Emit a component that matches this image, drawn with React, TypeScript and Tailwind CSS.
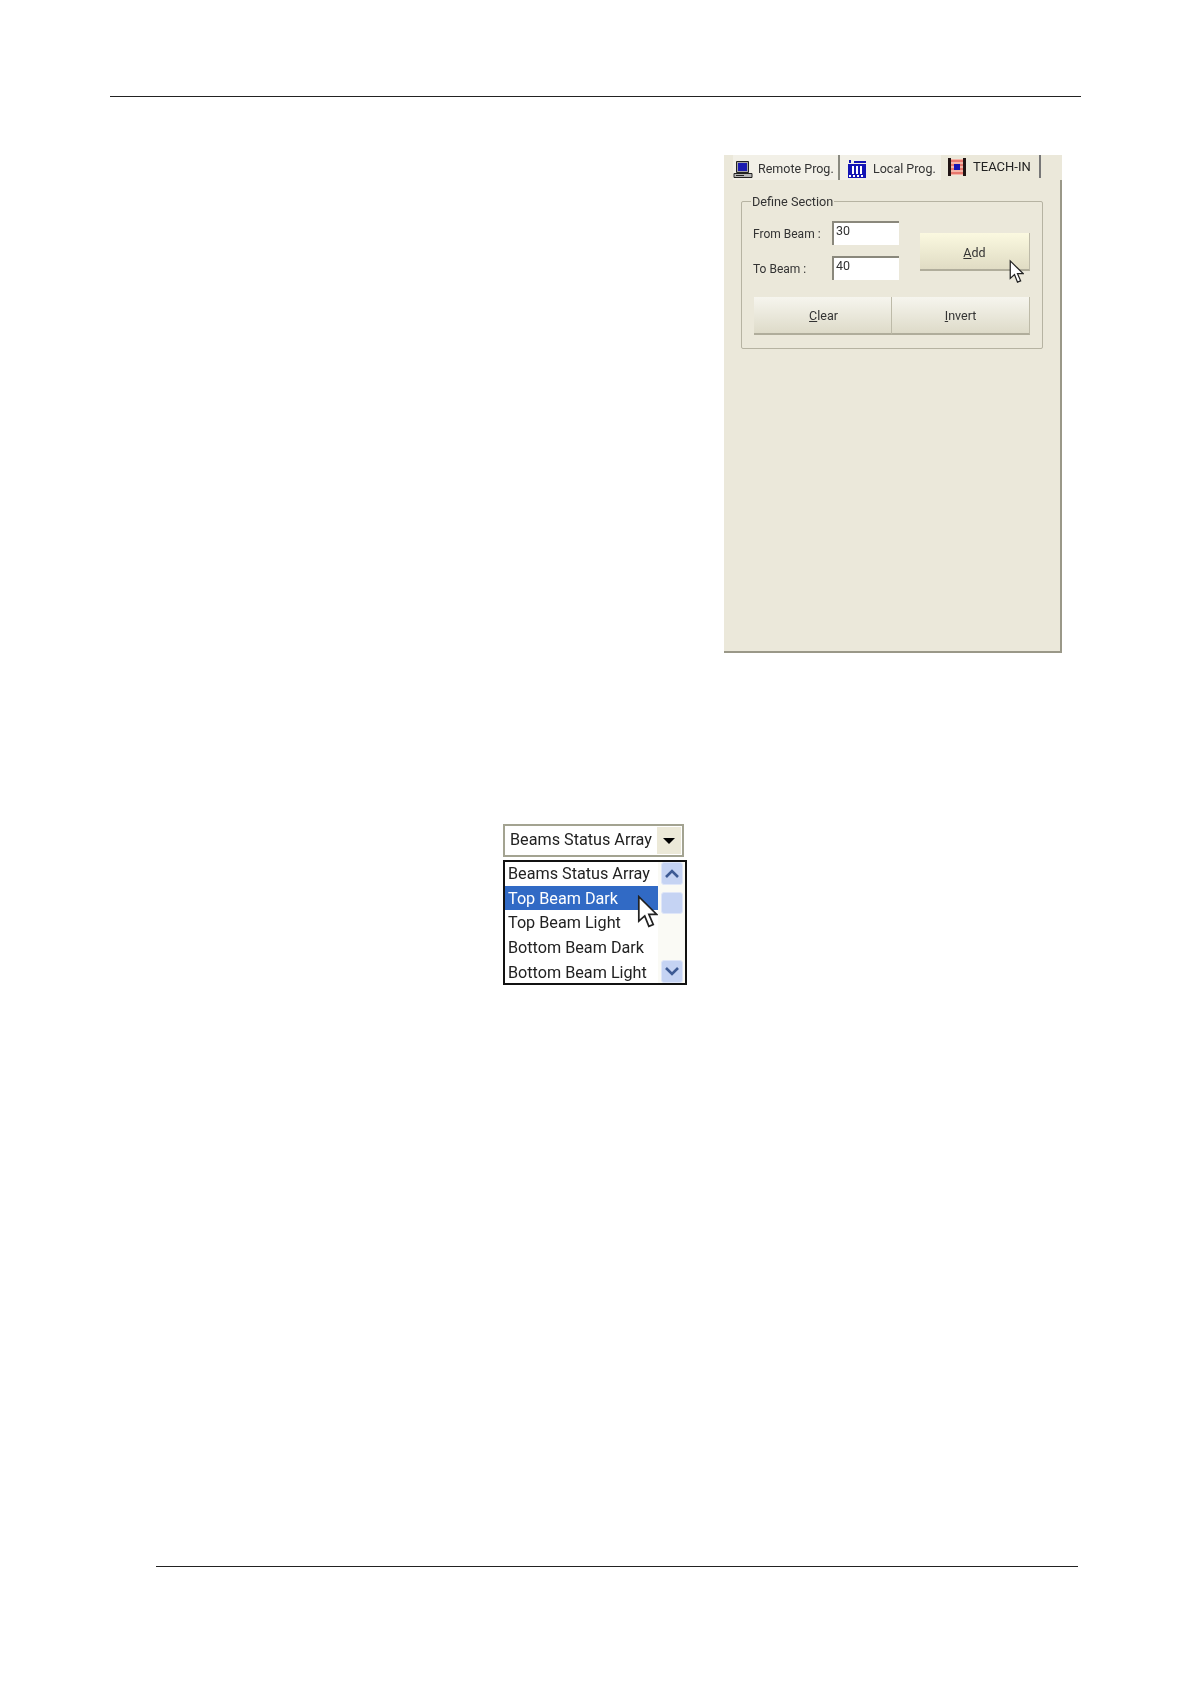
const Remote = () => (
  <svg width="20" height="18" viewBox="0 0 20 18" className="shrink-0">
    <path d="M3.500 .5h12v11h-12z" fill="#a4a4a4" stroke="#222" />
    <path d="M5 2h9v8H5z" fill="#1a1ab0" />
    <path d="M1 12.500h18v4H1z" fill="#b4b4b4" stroke="#222" />
    <path d="M3 14.500h8" stroke="#222" />
  </svg>
);
const Local = () => (
  <svg width="18" height="18" viewBox="0 0 18 18" className="shrink-0">
    <path d="M0 4h18v14H0z" fill="#1414b4" />
    <path d="M1 0h2v3H1zM6 1h12v2H6z" fill="#1414b4" />
    <path d="M4 6h2v8H4zM8 6h2v8H8zM12 6h2v8h-2z" fill="#fff" />
    <path d="M1 15h2v2H1zM5 15h2v2H5zM9 15h2v2H9zM13 15h2v2h-2z" fill="#fff" />
  </svg>
);
const Teach = () => (
  <svg width="18" height="18" viewBox="0 0 18 18" className="shrink-0">
    <path d="M0 1h18v16H0z" fill="#f5b5a8" />
    <path d="M0 3h18M0 7h18M0 11h18M0 15h18" stroke="#d83a34" />
    <path d="M0 0h3v18H0zM15 0h3v18h-3z" fill="#201414" />
    <path d="M6 6h6v6H6z" fill="#1414b4" />
  </svg>
);
const Cursor = ({ w, h }: { w: number; h: number }) => (
  <svg width={w} height={h} viewBox="0 0 12 19" className="absolute">
    <path d="M1 1v14l3.400-3 2.400 6 2.500-1-2.500-5.800h4.500z" fill="#fff" stroke="#222" strokeWidth="1" />
  </svg>
);
const btn = "flex items-center justify-center bg-gradient-to-b from-[#f6f5ee] to-[#dedbc9] border-b-2 border-r border-b-[#b0ad9b] border-r-[#bdbaa8] text-[12.5px] text-[#333] whitespace-nowrap pt-[3px]";
const Chev = ({ up }: { up: boolean }) => (
  <div className="w-[22px] h-[23px] bg-[#c5d3f3] border border-[#dfe6f8] rounded-[3px] flex items-center justify-center">
    <svg width="16" height="11" viewBox="0 0 16 11">
      <path d={up ? "M2 9l6-6 6 6" : "M2 2l6 6 6-6"} fill="none" stroke="#3d5a94" strokeWidth="2.600" />
    </svg>
  </div>
);
const row = "pl-[3px] h-[24.700px] leading-[26.500px]";
export default function App() {
  return (
    <div className="w-[1191px] h-[1684px] bg-white overflow-hidden flex flex-col" style={{ fontFamily: 'Roboto, "Liberation Sans", sans-serif' }}>
      <div className="ml-[110px] mt-[96px] w-[971px] h-px bg-[#222]" />
      <div className="ml-[724px] mt-[58px] w-[338px] h-[498px] flex flex-col blur-[0.4px]">
        <div className="h-[25px] flex bg-[#ebe8da] text-[12.5px] text-[#333] pl-[9px] whitespace-nowrap">
          <div className="flex items-center gap-[5px] w-[107px] bg-[#f2f0e7] border-r-2 border-[#8a8a80] h-[25px] pt-[4px]">
            <Remote /><span>Remote Prog.</span>
          </div>
          <div className="flex items-center gap-[7px] pl-[8px] w-[101px] bg-[#f2f0e7] h-[25px] pt-[3px]">
            <Local /><span>Local Prog.</span>
          </div>
          <div className="flex items-center gap-[7px] pl-[7px] h-[23px] w-[100px] border-r-2 border-[#777] text-[#222] text-[13px]">
            <Teach /><span>TEACH-IN</span>
          </div>
        </div>
        <div className="flex-1 bg-[#ebe8da] border-r-2 border-b-2 border-[#9a9888] pl-[17px] pt-[21px]">
          <div className="relative w-[302px] h-[148px] border border-[#b6b3a2] rounded-[2px] pt-[19px] pl-[12px]">
            <span className="absolute left-[9px] top-[-10px] px-px bg-[#ebe8da] text-[12.700px] text-[#333] whitespace-nowrap">Define Section</span>
            <div className="flex">
              <div className="flex flex-col gap-[11px] w-[79px] text-[12px] text-[#333] whitespace-nowrap pt-px -ml-px">
                <div className="h-[24px] flex items-center">From Beam :</div>
                <div className="h-[24px] flex items-center">To Beam :</div>
              </div>
              <div className="flex flex-col gap-[11px]">
                <div className="w-[67px] h-[24px] bg-white border-l-2 border-t-2 border-[#8a887c] text-[12.500px] text-[#333] pl-[2px] leading-[15px]">30</div>
                <div className="w-[67px] h-[24px] bg-white border-l-2 border-t-2 border-[#8a887c] text-[12.500px] text-[#333] pl-[2px] leading-[15px]">40</div>
              </div>
              <div className={`${btn} ml-[21px] mt-[12px] w-[110px] h-[38px] from-[#fbf9e0] to-[#e0dcc4] pt-[5px]`}>
                <span><u>A</u>dd</span>
              </div>
            </div>
            <div className="flex mt-[16px]">
              <div className={`${btn} w-[138px] h-[38px]`}><span className="pl-[2px]"><u>C</u>lear</span></div>
              <div className={`${btn} w-[138px] h-[38px]`}><span><u>I</u>nvert</span></div>
            </div>
            <div className="absolute left-[267px] top-[57px]"><Cursor w={15} h={25} /></div>
          </div>
        </div>
      </div>
      <div className="ml-[503px] mt-[171px] w-[184px] blur-[0.4px]">
        <div className="w-[181px] h-[33px] border-2 border-[#a3a391] flex items-center bg-white pl-[5px] text-[16.200px] text-[#222] whitespace-nowrap">
          <span className="flex-1">Beams Status Array</span>
          <div className="w-[24px] h-[27px] mr-px bg-[#ece9d8] flex items-center justify-center">
            <svg width="12" height="8" viewBox="0 0 12 8"><path d="M0 1h12L6 7z" fill="#000" /></svg>
          </div>
        </div>
        <div className="relative mt-[3px] w-[184px] h-[125px] border-2 border-[#111] bg-white flex text-[16.200px] text-[#222] whitespace-nowrap">
          <div className="w-[153px] overflow-hidden -mt-px">
            <div className={row}>Beams Status Array</div>
            <div className={`${row} bg-[#316ac5] text-white`}>Top Beam Dark</div>
            <div className={row}>Top Beam Light</div>
            <div className={row}>Bottom Beam Dark</div>
            <div className={row}>Bottom Beam Light</div>
          </div>
          <div className="flex-1 flex flex-col bg-[#fafaf5] pl-[3px] pr-[2px]">
            <Chev up />
            <div className="mt-[7px] w-[22px] h-[22px] bg-[#c5d3f3] border border-[#dfe6f8] rounded-[3px]" />
            <div className="flex-1" />
            <Chev up={false} />
          </div>
          <div className="absolute left-[132px] top-[33px]"><Cursor w={21} h={33} /></div>
        </div>
      </div>
      <div className="ml-[156px] mt-[581px] w-[922px] h-px bg-[#222]" />
    </div>
  );
}
